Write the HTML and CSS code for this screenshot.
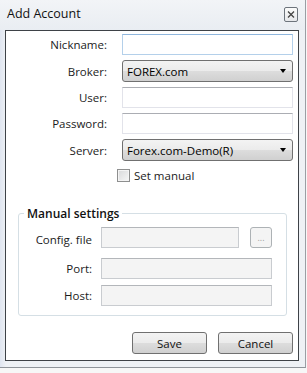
FILE: index.html
```html
<html>
    <head>
        <meta name="viewport" content="width=device-width, initial-scale=1" />
        <link rel="stylesheet" href="styles.css">
    </head>
    <body>
        <div class="window">
            <div class="titlebar">
                <span class="title">Add Account</span>
                <span class="close-btn">
                    <svg width="8" height="7" viewBox="0 0 8 7"><path d="M1 0.5 L7 6.5 M7 0.5 L1 6.5" stroke="#444" stroke-width="1.3" fill="none"/></svg>
                </span>
            </div>
            <div class="client">
                <div class="form">
                    <label class="lbl">Nickname:</label>
                    <div class="textbox focused"></div>
                    <label class="lbl">Broker:</label>
                    <div class="combo"><span>FOREX.com</span><span class="arrow"></span></div>
                    <label class="lbl">User:</label>
                    <div class="textbox"></div>
                    <label class="lbl">Password:</label>
                    <div class="textbox"></div>
                    <label class="lbl">Server:</label>
                    <div class="combo"><span>Forex.com-Demo(R)</span><span class="arrow"></span></div>
                </div>
                <div class="check-row">
                    <span class="checkbox"></span>
                    <span>Set manual</span>
                </div>
                <fieldset class="group">
                    <legend>Manual settings</legend>
                    <div class="group-grid">
                        <label class="lbl">Config. file</label>
                        <div class="file-row">
                            <div class="textbox disabled"></div>
                            <span class="browse-btn">...</span>
                        </div>
                        <label class="lbl">Port:</label>
                        <div class="textbox disabled"></div>
                        <label class="lbl">Host:</label>
                        <div class="textbox disabled"></div>
                    </div>
                </fieldset>
                <div class="actions">
                    <button class="btn">Save</button>
                    <button class="btn">Cancel</button>
                </div>
            </div>
        </div>
    </body>
</html>
```
FILE: styles.css
```css
body {
    margin: 0;
    background: #f7f7f7;
    font-family: 'Open Sans', 'Noto Sans', sans-serif;
    font-size: 11.5px;
    color: #1b1b1b;
}
.window {
    width: 306px;
    height: 368px;
    box-sizing: border-box;
    display: flex;
    flex-direction: column;
    background: linear-gradient(90deg, #dfe5f0 0px, #eef1f5 6px, #eef1f5 100%);
    border-right: 1px solid #9a9ea4;
    border-bottom: 1px solid #8f949a;
}
.titlebar {
    height: 30px;
    display: flex;
    align-items: flex-start;
    justify-content: space-between;
    padding: 0 7px 0 7px;
    background: linear-gradient(#f2f4f7, #e9edf2);
}
.title {
    font-size: 12.5px;
    color: #111;
    margin-top: 5px;
}
.close-btn {
    margin-top: 7px;
    width: 14px;
    height: 15px;
    box-sizing: border-box;
    border: 1px solid #6d747c;
    border-radius: 2px;
    background: linear-gradient(#fbfbfb, #e6e8eb);
    display: flex;
    align-items: center;
    justify-content: center;
}
.client {
    margin: 0 6px 0 5px;
    height: 331px;
    box-sizing: border-box;
    border: 1px solid #3e4247;
    background: #fff;
    padding: 3px 5px 0 0;
}
.form {
    display: grid;
    grid-template-columns: 101px 171px;
    column-gap: 15px;
    row-gap: 5px;
    align-items: center;
}
.lbl {
    text-align: right;
}
.textbox {
    height: 21px;
    box-sizing: border-box;
    border: 1px solid #e2e3ea;
    border-top-color: #abadb3;
    background: #fff;
}
.textbox.focused {
    border-color: #b4d0ea;
    border-top-color: #8fb6dd;
}
.textbox.disabled {
    background: #f4f4f4;
    border-color: #c9ccd0;
    border-top-color: #b3b6ba;
}
.combo {
    height: 22px;
    box-sizing: border-box;
    border: 1px solid #707070;
    border-radius: 3px;
    background: linear-gradient(#f3f3f3 0%, #ebebeb 50%, #dddddd 50%, #d0d0d0 100%);
    display: flex;
    align-items: center;
    justify-content: space-between;
    padding: 0 6px 0 4px;
    color: #000;
}
.arrow {
    width: 0;
    height: 0;
    border-left: 3.5px solid transparent;
    border-right: 3.5px solid transparent;
    border-top: 4px solid #000;
}
.check-row {
    display: flex;
    align-items: center;
    gap: 4px;
    padding-left: 111px;
    margin-top: 7px;
}
.checkbox {
    width: 13px;
    height: 13px;
    box-sizing: border-box;
    border: 1px solid #8e8f8f;
    background: linear-gradient(135deg, #d8d9da, #f6f6f6);
    box-shadow: inset 0 0 0 1px #f4f4f4;
}
.group {
    margin: 22px 0 0 12px;
    width: 269px;
    box-sizing: border-box;
    border: 1px solid #d5dfe5;
    border-radius: 3px;
    padding: 5px 13px 9px 0;
}
.group legend {
    margin-left: 5px;
    padding: 0 3px;
    font-size: 12px;
    font-weight: 600;
    color: #111;
}
.group-grid {
    display: grid;
    grid-template-columns: 73px 171px;
    column-gap: 9px;
    row-gap: 6px;
    align-items: center;
}
.group-grid .textbox {
    height: 21px;
}
.file-row {
    display: flex;
    gap: 11px;
    margin-bottom: 4px;
}
.file-row .textbox {
    width: 138px;
    height: 21px;
}
.browse-btn {
    width: 22px;
    height: 21px;
    box-sizing: border-box;
    border: 1px solid #adb2b5;
    border-radius: 3px;
    background: #f4f4f4;
    color: #a0a0a0;
    font-size: 9px;
    display: flex;
    align-items: center;
    justify-content: center;
}
.actions {
    display: flex;
    justify-content: flex-end;
    gap: 11px;
    margin-top: 16px;
}
.btn {
    width: 75px;
    height: 22px;
    border: 1px solid #707070;
    border-radius: 3px;
    background: linear-gradient(#f3f3f3 0%, #ebebeb 50%, #dddddd 50%, #d0d0d0 100%);
    font-family: 'Open Sans', 'Noto Sans', sans-serif;
    font-size: 11.5px;
    color: #111;
    padding: 0;
}
```
